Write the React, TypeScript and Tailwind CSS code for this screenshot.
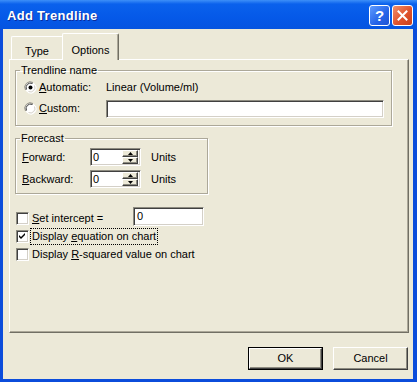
import React from "react";

const U = ({ c }: { c: string }) => <span className="underline underline-offset-[1px]">{c}</span>;

function Radio({ checked }: { checked?: boolean }) {
  return (
    <svg width="13" height="13" viewBox="0 0 13 13" className="shrink-0">
      <circle cx="6.5" cy="6.5" r="5.5" fill="#ffffff" />
      <path d="M1.5 9 A5.5 5.5 0 0 1 9 1.5" stroke="#8d8b80" strokeWidth="1" fill="none" />
      <path d="M2.5 8.5 A4.5 4.5 0 0 1 8.5 2.5" stroke="#404040" strokeWidth="1" fill="none" />
      <path d="M4 11.5 A5.5 5.5 0 0 0 11.5 4" stroke="#ffffff" strokeWidth="1" fill="none" />
      <path d="M4.5 10.5 A4.5 4.5 0 0 0 10.5 4.5" stroke="#d4d0c8" strokeWidth="1" fill="none" />
      {checked && <circle cx="6.5" cy="6.5" r="2" fill="#000000" />}
    </svg>
  );
}

function Check({ checked }: { checked?: boolean }) {
  return (
    <div className="w-[13px] h-[13px] shrink-0 bg-white border border-t-[#8d8b80] border-l-[#8d8b80] border-r-white border-b-white shadow-[inset_1px_1px_0_#404040,inset_-1px_-1px_0_#d4d0c8] flex items-center justify-center">
      {checked && (
        <svg width="7" height="7" viewBox="0 0 7 7">
          <path d="M0 2 L2 4 L6 0 L6 2 L2 6 L0 4 Z" fill="#000000" />
        </svg>
      )}
    </div>
  );
}

const field =
  "bg-white border border-t-[#8d8b80] border-l-[#8d8b80] border-r-white border-b-white shadow-[inset_1px_1px_0_#404040,inset_-1px_-1px_0_#d4d0c8]";

function SpinBox() {
  return (
    <div className={`w-[51px] h-[18px] flex ${field} pl-[2px] pr-[2px] py-[1px]`}>
      <div className="flex-1 leading-[14px]">0</div>
      <div className="w-[16px] flex flex-col">
        {[0, 1].map((i) => (
          <div
            key={i}
            className="flex-1 bg-[#ece9d8] border border-t-white border-l-white border-r-[#404040] border-b-[#404040] shadow-[inset_-1px_-1px_0_#8d8b80] flex items-center justify-center"
          >
            <svg width="5" height="3" viewBox="0 0 5 3">
              {i === 0 ? <path d="M2.5 0 L5 3 L0 3 Z" fill="#000" /> : <path d="M0 0 L5 0 L2.5 3 Z" fill="#000" />}
            </svg>
          </div>
        ))}
      </div>
    </div>
  );
}

const groupCls =
  "border border-[#aca899] shadow-[inset_1px_1px_0_#ffffff,1px_1px_0_#ffffff] box-border";

function Button({ label, def }: { label: string; def?: boolean }) {
  return (
    <div className={`w-[75px] h-[23px] ${def ? "border border-black" : ""}`}>
      <div className="w-full h-full bg-[#ece9d8] border border-t-white border-l-white border-r-[#404040] border-b-[#404040] shadow-[inset_-1px_-1px_0_#8d8b80] flex items-center justify-center">
        {label}
      </div>
    </div>
  );
}

export default function App() {
  return (
    <div className="w-[417px] h-[382px] flex flex-col bg-[#0b4cdb] overflow-hidden font-['Liberation_Sans',Arial,sans-serif] text-[11px] text-black">
      {/* Title bar */}
      <div className="h-[29px] shrink-0 flex items-center pl-[7px] pr-[4px] pt-[2px] bg-[linear-gradient(to_bottom,#3d8ff8_0%,#0a61ec_14%,#0559e8_60%,#0654e0_100%)]">
        <span className="text-white font-bold text-[13px] tracking-[0.3px] [text-shadow:1px_1px_0_#0b2b9a]">Add Trendline</span>
        <div className="ml-auto flex gap-[2px]">
          <div className="w-[21px] h-[21px] rounded-[3px] border border-white bg-[linear-gradient(135deg,#5d9bff,#2664e8_60%,#1d52d4)] flex items-center justify-center text-white font-bold text-[15px] leading-none">
            ?
          </div>
          <div className="w-[21px] h-[21px] rounded-[3px] border border-white bg-[linear-gradient(135deg,#f0906c,#e0532d_55%,#c8401c)] flex items-center justify-center">
            <svg width="11" height="11" viewBox="0 0 11 11">
              <path d="M1.5 1.5 L9.5 9.5 M9.5 1.5 L1.5 9.5" stroke="#fff" strokeWidth="2" strokeLinecap="square" />
            </svg>
          </div>
        </div>
      </div>

      {/* Body */}
      <div className="flex-1 ml-[3px] mr-[4px] mb-[3px] bg-[#ece9d8] flex flex-col">
        {/* Tabs */}
        <div className="h-[26px] mt-[4px] flex items-end pl-[8px]">
          <div className="w-[51px] h-[23px] rounded-tl-[2px] border-t border-l border-white flex items-start justify-center pt-[6px]">
            Type
          </div>
          <div className="relative z-10 w-[57px] h-[27px] mb-[-1px] rounded-t-[2px] bg-[#ece9d8] border-t border-l border-white border-r border-r-[#716f64] shadow-[inset_-1px_0_0_#aca899] flex items-start justify-center pt-[8px]">
            Options
          </div>
        </div>

        {/* Panel */}
        <div className="ml-[6px] w-[400px] h-[274px] border border-t-white border-l-white border-r-[#716f64] border-b-[#716f64] shadow-[inset_-1px_-1px_0_#aca899] flex flex-col">
          <fieldset className={`ml-[5px] mt-[3px] w-[377px] h-[63px] ${groupCls}`}>
            <legend className="ml-[4px] px-[1px] leading-[14px]">Trendline name</legend>
            <div className="flex flex-col pl-[8px]">
              <div className="h-[21px] flex items-center">
                <div className="w-[82px] flex items-center gap-[2px]">
                  <Radio checked />
                  <span><U c="A" />utomatic:</span>
                </div>
                <span>Linear (Volume/ml)</span>
              </div>
              <div className="h-[21px] flex items-center">
                <div className="w-[82px] flex items-center gap-[2px]">
                  <Radio />
                  <span><U c="C" />ustom:</span>
                </div>
                <div className={`w-[278px] h-[18px] ${field}`} />
              </div>
            </div>
          </fieldset>

          <fieldset className={`ml-[5px] mt-[5px] w-[193px] h-[63px] ${groupCls}`}>
            <legend className="ml-[4px] px-[1px] leading-[14px]">Forecast</legend>
            <div className="flex flex-col pl-[6px] pt-[3px] gap-[4px]">
              <div className="h-[18px] flex items-center">
                <span className="w-[68px]"><U c="F" />orward:</span>
                <SpinBox />
                <span className="ml-[10px]">Units</span>
              </div>
              <div className="h-[18px] flex items-center">
                <span className="w-[68px]"><U c="B" />ackward:</span>
                <SpinBox />
                <span className="ml-[10px]">Units</span>
              </div>
            </div>
          </fieldset>

          <div className="ml-[6px] mt-[13px] h-[19px] flex items-start">
            <div className="w-[117px] flex items-start pt-[5px]">
              <Check />
              <span className="ml-[3px] leading-[13px]"><U c="S" />et intercept =</span>
            </div>
            <div className={`w-[71px] h-[19px] ${field} pl-[3px] leading-[16px]`}>0</div>
          </div>

          <div className="ml-[6px] mt-[2px] h-[17px] flex items-center">
            <Check checked />
            <span className="ml-[1px] h-[17px] border border-dotted border-black px-[1px] leading-[15px]">
              Display <U c="e" />quation on chart
            </span>
          </div>

          <div className="ml-[6px] h-[18px] flex items-center">
            <Check />
            <span className="ml-[3px]">Display <U c="R" />-squared value on chart</span>
          </div>
        </div>

        {/* Buttons */}
        <div className="mt-[14px] flex justify-end gap-[10px] pr-[5px]">
          <Button label="OK" def />
          <Button label="Cancel" />
        </div>
      </div>
    </div>
  );
}
